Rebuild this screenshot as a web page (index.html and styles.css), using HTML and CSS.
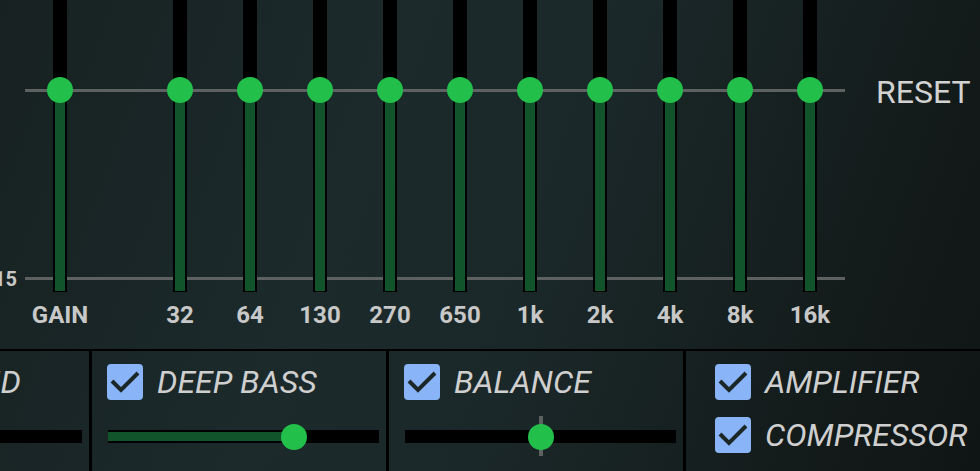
FILE: index.html
```html
<!DOCTYPE html>
<html lang="en">
<head>
<meta charset="UTF-8">
<meta name="viewport" content="width=device-width, initial-scale=1.0">
<title>Equalizer</title>
<link rel="stylesheet" href="styles.css">
</head>
<body>

<div id="top">
    <div id="faders">
        <span class="scaleLabel">-15</span>

        <div class="band bandGain">
            <div class="track"><div class="fill" style="height: 201px;"><span class="thumb"></span></div></div>
            <div class="bandLabel">GAIN</div>
        </div>
        <div class="band">
            <div class="track"><div class="fill" style="height: 201px;"><span class="thumb"></span></div></div>
            <div class="bandLabel">32</div>
        </div>
        <div class="band">
            <div class="track"><div class="fill" style="height: 201px;"><span class="thumb"></span></div></div>
            <div class="bandLabel">64</div>
        </div>
        <div class="band">
            <div class="track"><div class="fill" style="height: 201px;"><span class="thumb"></span></div></div>
            <div class="bandLabel">130</div>
        </div>
        <div class="band">
            <div class="track"><div class="fill" style="height: 201px;"><span class="thumb"></span></div></div>
            <div class="bandLabel">270</div>
        </div>
        <div class="band">
            <div class="track"><div class="fill" style="height: 201px;"><span class="thumb"></span></div></div>
            <div class="bandLabel">650</div>
        </div>
        <div class="band">
            <div class="track"><div class="fill" style="height: 201px;"><span class="thumb"></span></div></div>
            <div class="bandLabel">1k</div>
        </div>
        <div class="band">
            <div class="track"><div class="fill" style="height: 201px;"><span class="thumb"></span></div></div>
            <div class="bandLabel">2k</div>
        </div>
        <div class="band">
            <div class="track"><div class="fill" style="height: 201px;"><span class="thumb"></span></div></div>
            <div class="bandLabel">4k</div>
        </div>
        <div class="band">
            <div class="track"><div class="fill" style="height: 201px;"><span class="thumb"></span></div></div>
            <div class="bandLabel">8k</div>
        </div>
        <div class="band">
            <div class="track"><div class="fill" style="height: 201px;"><span class="thumb"></span></div></div>
            <div class="bandLabel">16k</div>
        </div>
    </div>

    <div id="resetButton">RESET</div>
</div>

<div id="effects">
    <div class="panel">
        <div class="checkRow">
            <svg class="checkBox" viewBox="0 0 36 36"><rect width="36" height="36" rx="4"/><polyline points="5,17 14,26 31,9"/></svg>
            <span class="checkLabel">SURROUND</span>
        </div>
        <div class="hslider"><div class="hfill" style="width: 10%;"><span class="thumb hthumb"></span></div></div>
    </div>

    <div class="panel">
        <div class="checkRow">
            <svg class="checkBox" viewBox="0 0 36 36"><rect width="36" height="36" rx="4"/><polyline points="5,17 14,26 31,9"/></svg>
            <span class="checkLabel">DEEP BASS</span>
        </div>
        <div class="hslider"><div class="hfill" style="width: 68.5%;"><span class="thumb hthumb"></span></div></div>
    </div>

    <div class="panel">
        <div class="checkRow">
            <svg class="checkBox" viewBox="0 0 36 36"><rect width="36" height="36" rx="4"/><polyline points="5,17 14,26 31,9"/></svg>
            <span class="checkLabel">BALANCE</span>
        </div>
        <div class="hslider balance">
            <span class="centerTick"></span>
            <div class="hfill noFill" style="width: 50%;"><span class="thumb hthumb"></span></div>
        </div>
    </div>

    <div class="panel panelLast">
        <div class="checkRow">
            <svg class="checkBox" viewBox="0 0 36 36"><rect width="36" height="36" rx="4"/><polyline points="5,17 14,26 31,9"/></svg>
            <span class="checkLabel">AMPLIFIER</span>
        </div>
        <div class="checkRow">
            <svg class="checkBox" viewBox="0 0 36 36"><rect width="36" height="36" rx="4"/><polyline points="5,17 14,26 31,9"/></svg>
            <span class="checkLabel">COMPRESSOR</span>
        </div>
    </div>
</div>

</body>
</html>
```

FILE: styles.css
```css
html,
body {
    height: 100%;
}
body {
    margin: 0;
    overflow: hidden;
    font-family: Roboto, "Liberation Sans", sans-serif;
    background: linear-gradient(110deg, #172121 0%, #1c2a2b 35%, #1b2829 55%, #131b1a 85%, #0f1514 100%);
}
#top {
    display: flex;
    align-items: flex-start;
}
#faders {
    position: relative;
    display: flex;
    width: 820px;
    margin-left: 25px;
    background:
        linear-gradient(#5d6261, #5d6261) 0 89px / 100% 3px no-repeat,
        linear-gradient(#5d6261, #5d6261) 0 277px / 100% 3px no-repeat;
}
.scaleLabel {
    position: absolute;
    top: 269px;
    right: calc(100% + 8px);
    font-size: 20px;
    font-weight: bold;
    line-height: 20px;
    color: #c8c8c8;
}
.band {
    width: 70px;
    display: flex;
    flex-direction: column;
    align-items: center;
}
.bandGain {
    margin-right: 50px;
}
.track {
    width: 14px;
    height: 292px;
    padding: 0 2px 1px;
    box-sizing: border-box;
    background-color: #000;
    display: flex;
    flex-direction: column;
    justify-content: flex-end;
}
.fill {
    position: relative;
    background-color: #11532a;
}
.thumb {
    position: absolute;
    top: -13px;
    left: 50%;
    width: 26px;
    height: 26px;
    margin-left: -13px;
    border-radius: 50%;
    background-color: #22c04b;
}
.bandLabel {
    margin-top: 9px;
    font-size: 24px;
    font-weight: bold;
    line-height: 28px;
    color: #c8c8c8;
}
#resetButton {
    margin: 73px 0 0 31px;
    font-size: 32px;
    color: #d2d2d2;
    cursor: pointer;
}

#effects {
    display: flex;
    margin: 20px 0 0 -205px;
    border-top: 2px solid #000;
    height: 200px;
}
.panel {
    width: 297px;
    flex-shrink: 0;
    padding: 13px 7px 0 15px;
    box-sizing: border-box;
    border-right: 3px solid #000;
    display: flex;
    flex-direction: column;
}
.panel > * {
    flex-shrink: 0;
}
.panelLast {
    flex: 1;
    border-right: none;
    padding-left: 29px;
    gap: 17px;
}
.checkRow {
    height: 36px;
    display: flex;
    align-items: center;
    gap: 14px;
}
.checkBox {
    width: 36px;
    height: 36px;
    flex-shrink: 0;
}
.checkBox rect {
    fill: #8ab4f8;
}
.checkBox polyline {
    fill: none;
    stroke: #1c2728;
    stroke-width: 4;
}
.checkLabel {
    font-size: 32px;
    font-style: italic;
    color: #cfcfcf;
    white-space: nowrap;
}
.hslider {
    position: relative;
    height: 13px;
    margin: 30px 0 0 1px;
    padding: 2px 0;
    box-sizing: border-box;
    background-color: #000;
}
.hfill {
    position: relative;
    height: 9px;
    background-color: #11532a;
}
.noFill {
    background-color: transparent;
}
.hthumb {
    top: 50%;
    left: auto;
    right: -13px;
    margin: -13px 0 0;
}
.centerTick {
    position: absolute;
    left: 50%;
    top: -14px;
    width: 4px;
    height: 40px;
    margin-left: -2px;
    background-color: #5d6261;
}
```
